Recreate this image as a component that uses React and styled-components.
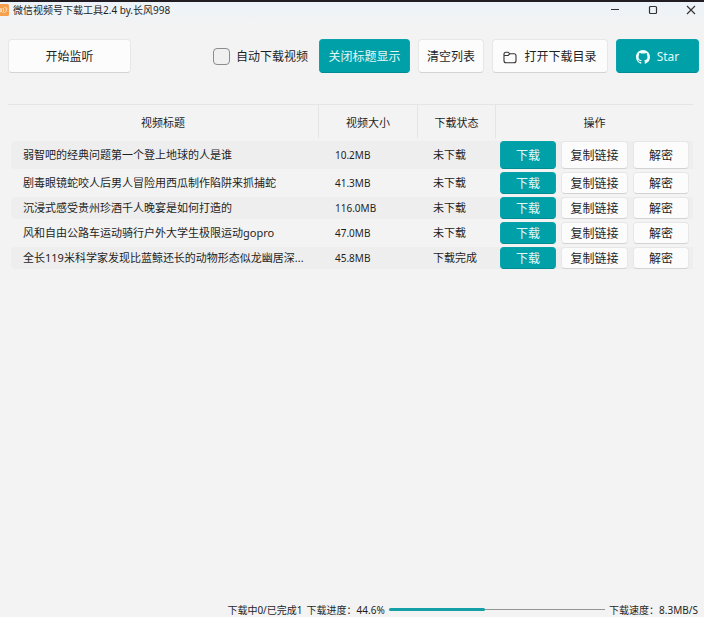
// React
import React, { useState } from "react";

// Tools
import styled, { createGlobalStyle } from "styled-components";

const GlobalStyle = createGlobalStyle`
  * {
    box-sizing: border-box;
  }

  body {
    background: #f3f3f3;
    color: #1f1f1f;
    font-family: "Noto Sans", "Noto Sans CJK SC", sans-serif;
    font-size: 11px;
    margin: 0;
  }
`;

const Window = styled.div`
  border-top: 2px solid #211d22;
  display: flex;
  flex-direction: column;
  min-height: 100vh;
`;

const TitleBar = styled.header`
  align-items: center;
  background: linear-gradient(#ecf3f9, #f3f3f3);
  display: flex;
  height: 24px;
  padding-bottom: 8px;
`;

const Logo = styled.svg`
  flex: none;
  height: 12px;
  width: 9px;
`;

const Title = styled.h1`
  flex: 1;
  font-size: 10px;
  font-weight: 400;
  line-height: 16px;
  margin: 0;
  padding-left: 4px;
`;

const WindowButton = styled.button`
  align-items: center;
  background: none;
  border: 0;
  display: flex;
  height: 16px;
  justify-content: center;
  padding: 0;
  width: 38px;
`;

const WindowButtons = styled.div`
  display: flex;
  margin-right: -6px;
`;

const Toolbar = styled.div`
  align-items: center;
  display: flex;
  gap: 8px;
  padding: 13px 5px 0 8px;
`;

const Button = styled.button`
  align-items: center;
  background: ${(props) => (props.$primary ? "#00a0a8" : "#fcfcfc")};
  border: 1px solid ${(props) => (props.$primary ? "#0aa3ab" : "#e7e7e7")};
  border-bottom-color: ${(props) => (props.$primary ? "#008c93" : "#d3d3d3")};
  border-radius: 4px;
  color: ${(props) => (props.$primary ? "#e2f8f9" : "#1f1f1f")};
  cursor: pointer;
  display: flex;
  flex: none;
  font-family: inherit;
  font-size: 12px;
  gap: 7px;
  height: 34px;
  justify-content: center;
  line-height: 16px;
  padding: 2px 0 0;
  white-space: nowrap;
  width: ${(props) => props.$width}px;
`;

const RowButton = styled(Button)`
  height: ${(props) => (props.$tall ? 28 : 22)}px;
`;

const CheckLabel = styled.label`
  align-items: center;
  display: flex;
  font-size: 12px;
  gap: 6px;
  margin-left: auto;
  margin-right: 3px;
  white-space: nowrap;
`;

const Checkbox = styled.input`
  appearance: none;
  background: #f0f0f0;
  border: 1px solid #8c8c8c;
  border-radius: 4px;
  height: 17px;
  margin: 0;
  width: 17px;

  &:checked {
    background: #00a0a8;
  }
`;

const TableArea = styled.main`
  flex: 1;
  padding: 31px 11px 0 8px;
`;

const Table = styled.table`
  border-spacing: 0 3px;
  margin-top: -3px;
  table-layout: fixed;
  width: 100%;
`;

const HeadCell = styled.th`
  border-left: 1px solid #e5e5e5;
  border-top: 1px solid #e5e5e5;
  font-weight: 400;
  height: 34px;
  padding: 0;
  width: ${(props) => (props.$width ? `${props.$width}px` : "auto")};

  &:first-child {
    border-left: 0;
  }
`;

const Row = styled.tr`
  height: ${(props) => (props.$tall ? 28 : 22)}px;

  &:nth-child(odd) td {
    background-color: #eeeeee;
  }
`;

const Cell = styled.td`
  background-clip: padding-box;
  line-height: 16px;
  padding: 0 0 0 16px;
  white-space: nowrap;

  &:first-child {
    border-left: 3px solid transparent;
    border-radius: 6px 0 0 6px;
    padding-left: 12px;
  }
`;

const SizeCell = styled(Cell)`
  font-size: 10px;
  padding-left: 17px;
`;

const ActionCell = styled(Cell)`
  padding-left: 5px;
`;

const Actions = styled.div`
  display: flex;
  gap: 5px;
`;

const Footer = styled.footer`
  align-items: center;
  display: flex;
  font-size: 10px;
  gap: 4px;
  height: 15px;
  justify-content: flex-end;
  line-height: 14px;
  padding-right: 6px;
  white-space: nowrap;
`;

const Track = styled.div`
  align-items: center;
  background: linear-gradient(#959595, #959595) center / 100% 1px no-repeat;
  display: flex;
  height: 3px;
  width: 31%;
`;

const Fill = styled.div`
  background: #14a0a6;
  border-radius: 2px;
  height: 3px;
`;

const videos = [
  { title: "弱智吧的经典问题第一个登上地球的人是谁", size: "10.2MB", status: "未下载" },
  { title: "剧毒眼镜蛇咬人后男人冒险用西瓜制作陷阱来抓捕蛇", size: "41.3MB", status: "未下载" },
  { title: "沉浸式感受贵州珍酒千人晚宴是如何打造的", size: "116.0MB", status: "未下载" },
  { title: "风和自由公路车运动骑行户外大学生极限运动gopro", size: "47.0MB", status: "未下载" },
  { title: "全长119米科学家发现比蓝鲸还长的动物形态似龙幽居深...", size: "45.8MB", status: "下载完成" },
];

function FolderIcon() {
  return (
    <svg width="14" height="13" viewBox="0 0 14 13" fill="none" stroke="#333" strokeWidth="1.1">
      <path d="M1 3.2Q1 1.2 3 1.2H5.1L6.8 2.8H11Q13 2.8 13 4.8V9.8Q13 11.8 11 11.8H3Q1 11.8 1 9.8Z" />
      <path d="M1.2 4.5H5.1L6.8 2.8" />
    </svg>
  );
}

function GithubIcon() {
  return (
    <svg width="14" height="14" viewBox="0 0 16 16" fill="#f2ffff">
      <path d="M8 0C3.58 0 0 3.58 0 8c0 3.54 2.29 6.53 5.47 7.59.4.07.55-.17.55-.38 0-.19-.01-.82-.01-1.49-2.01.37-2.53-.49-2.69-.94-.09-.23-.48-.94-.82-1.13-.28-.15-.68-.52-.01-.53.63-.01 1.08.58 1.23.82.72 1.21 1.87.87 2.33.66.07-.52.28-.87.51-1.07-1.78-.2-3.64-.89-3.64-3.95 0-.87.31-1.59.82-2.15-.08-.2-.36-1.02.08-2.12 0 0 .67-.21 2.2.82.64-.18 1.32-.27 2-.27s1.36.09 2 .27c1.53-1.04 2.2-.82 2.2-.82.44 1.1.16 1.92.08 2.12.51.56.82 1.27.82 2.15 0 3.07-1.87 3.75-3.65 3.95.29.25.54.73.54 1.48 0 1.07-.01 1.93-.01 2.2 0 .21.15.46.55.38A8.01 8.01 0 0 0 16 8c0-4.42-3.58-8-8-8Z" />
    </svg>
  );
}

function App() {
  const [autoDownload, setAutoDownload] = useState(false);
  const progress = 44.6;

  return (
    <Window>
      <GlobalStyle />
      <TitleBar>
        <Logo viewBox="0 0 9 12" aria-hidden="true">
          <path d="M0 0H7.5Q9 0 9 1.5V10.5Q9 12 7.5 12H0Z" fill="#f6a04d" />
          <path
            d="M0 4L2.2 8.5M2.2 4L0 8.5M3.5 4.2V7.5Q3.5 8.5 4.5 8.5Q6.8 8.2 6.8 4.2M4.5 3.5L6.8 4.2"
            fill="none"
            stroke="#ffe7cb"
            strokeWidth="0.9"
          />
        </Logo>
        <Title>微信视频号下载工具2.4 by.长风998</Title>
        <WindowButtons>
          <WindowButton aria-label="最小化">
            <svg width="10" height="10" stroke="#333">
              <path d="M1 4.5H9" />
            </svg>
          </WindowButton>
          <WindowButton aria-label="最大化">
            <svg width="10" height="10" fill="none" stroke="#333" strokeWidth="1.2">
              <rect x="1.5" y="1.5" width="7" height="7" rx="1" />
            </svg>
          </WindowButton>
          <WindowButton aria-label="关闭">
            <svg width="10" height="10" stroke="#333" strokeWidth="1.1">
              <path d="M1 1L9 9M9 1L1 9" />
            </svg>
          </WindowButton>
        </WindowButtons>
      </TitleBar>

      <Toolbar>
        <Button $width={123}>开始监听</Button>
        <CheckLabel>
          <Checkbox
            type="checkbox"
            checked={autoDownload}
            onChange={(e) => setAutoDownload(e.target.checked)}
          />
          自动下载视频
        </CheckLabel>
        <Button $primary $width={91}>关闭标题显示</Button>
        <Button $width={66}>清空列表</Button>
        <Button $width={116}>
          <FolderIcon />
          打开下载目录
        </Button>
        <Button $primary $width={83}>
          <GithubIcon />
          Star
        </Button>
      </Toolbar>

      <TableArea>
        <Table>
          <thead>
            <tr>
              <HeadCell>视频标题</HeadCell>
              <HeadCell $width={99}>视频大小</HeadCell>
              <HeadCell $width={78}>下载状态</HeadCell>
              <HeadCell $width={198}>操作</HeadCell>
            </tr>
          </thead>
          <tbody>
            {videos.map((video, index) => (
              <Row key={video.title} $tall={index === 0}>
                <Cell>{video.title}</Cell>
                <SizeCell>{video.size}</SizeCell>
                <Cell>{video.status}</Cell>
                <ActionCell>
                  <Actions>
                    <RowButton $primary $width={56} $tall={index === 0}>下载</RowButton>
                    <RowButton $width={67} $tall={index === 0}>复制链接</RowButton>
                    <RowButton $width={56} $tall={index === 0}>解密</RowButton>
                  </Actions>
                </ActionCell>
              </Row>
            ))}
          </tbody>
        </Table>
      </TableArea>

      <Footer>
        <span>下载中0/已完成1</span>
        <span>下载进度：{progress}%</span>
        <Track role="progressbar" aria-label="下载进度" aria-valuenow={progress}>
          <Fill style={{ width: `${progress}%` }} />
        </Track>
        <span>下载速度：8.3MB/S</span>
      </Footer>
    </Window>
  );
}

export default App;
